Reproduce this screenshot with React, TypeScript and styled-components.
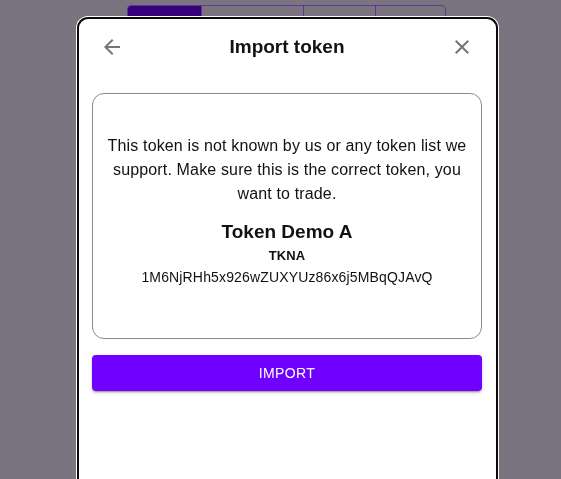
import React from "react";
import styled, { createGlobalStyle } from "styled-components";

const Global = createGlobalStyle`
  html, body { margin: 0; padding: 0; height: 100%; }
  body {
    background: #7a7480;
    font-family: "Liberation Sans", Arial, sans-serif;
    overflow: hidden;
  }
`;

const Page = styled.div`
  display: flex;
  justify-content: center;
  padding: 5px 0 0 12px;
  height: 479px;
  box-sizing: border-box;
`;

const Tabs = styled.div`
  display: flex;
  height: 44px;
  border: 1px solid #5b3c8c;
  border-radius: 4px;
  overflow: hidden;
  align-self: flex-start;
`;

const Tab = styled.div<{ $w: number; $active?: boolean }>`
  width: ${(p) => p.$w}px;
  background: ${(p) => (p.$active ? "#36007b" : "transparent")};
  & + & { border-left: 1px solid #5b3c8c; }
`;

const Dialog = styled.div`
  position: fixed;
  left: 77px;
  top: 17px;
  width: 421px;
  height: 480px;
  box-sizing: border-box;
  background: #fff;
  border: 2px solid #0a0a0a;
  border-bottom: none;
  border-radius: 11px 11px 0 0;
  box-shadow: 0 0 0 1px #ffffff;
  padding: 8px 14px 0 13px;
  display: flex;
  flex-direction: column;
`;

const Header = styled.div`
  display: flex;
  align-items: center;
  justify-content: space-between;
  height: 40px;
`;

const IconBtn = styled.button`
  width: 40px;
  height: 40px;
  border: none;
  background: transparent;
  padding: 8px;
  display: flex;
  align-items: center;
  justify-content: center;
  color: #757575;
`;

const Title = styled.h2`
  margin: 0;
  font-size: 19px;
  font-weight: 700;
  color: #111;
`;

const Card = styled.div`
  margin-top: 26px;
  height: 246px;
  box-sizing: border-box;
  border: 1px solid #8a8a8a;
  border-radius: 12px;
  padding: 0 12px 12px;
  display: flex;
  flex-direction: column;
  align-items: center;
  justify-content: center;
  text-align: center;
  color: #111;
  letter-spacing: 0.15px;
`;

const Warning = styled.p`
  margin: 0;
  font-size: 16px;
  line-height: 24px;
`;

const Name = styled.div`
  margin-top: 14px;
  font-size: 19px;
  font-weight: 700;
  line-height: 24px;
  letter-spacing: 0;
`;

const Symbol = styled.div`
  font-size: 13px;
  font-weight: 700;
  line-height: 24px;
`;

const Address = styled.div`
  font-size: 14px;
  line-height: 18px;
`;

const ImportButton = styled.button`
  margin-top: 16px;
  height: 36px;
  width: 100%;
  border: none;
  border-radius: 4px;
  background: #7000ff;
  color: #fff;
  font-family: "Liberation Sans", Arial, sans-serif;
  font-size: 14px;
  letter-spacing: 0.4px;
  text-transform: uppercase;
  box-shadow: 0 3px 1px -2px rgba(0,0,0,0.2), 0 2px 2px 0 rgba(0,0,0,0.14), 0 1px 5px 0 rgba(0,0,0,0.12);
`;

const ArrowIcon = () => (
  <svg width="24" height="24" viewBox="0 0 24 24" fill="currentColor">
    <path d="M20 11H7.83l5.59-5.59L12 4l-8 8 8 8 1.41-1.41L7.83 13H20v-2z" />
  </svg>
);

const CloseIcon = () => (
  <svg width="24" height="24" viewBox="0 0 24 24" fill="currentColor">
    <path d="M19 6.41 17.59 5 12 10.59 6.41 5 5 6.41 10.59 12 5 17.59 6.41 19 12 13.41 17.59 19 19 17.59 13.41 12z" />
  </svg>
);

export default function App() {
  return (
    <>
      <Global />
      <Page>
        <Tabs>
          <Tab $w={73} $active />
          <Tab $w={101} />
          <Tab $w={71} />
          <Tab $w={69} />
        </Tabs>
      </Page>
      <Dialog role="dialog">
        <Header>
          <IconBtn aria-label="back"><ArrowIcon /></IconBtn>
          <Title>Import token</Title>
          <IconBtn aria-label="close"><CloseIcon /></IconBtn>
        </Header>
        <Card>
          <Warning>
            This token is not known by us or any token list we support. Make sure this is the correct token, you want to trade.
          </Warning>
          <Name>Token Demo A</Name>
          <Symbol>TKNA</Symbol>
          <Address>1M6NjRHh5x926wZUXYUz86x6j5MBqQJAvQ</Address>
        </Card>
        <ImportButton>Import</ImportButton>
      </Dialog>
    </>
  );
}
